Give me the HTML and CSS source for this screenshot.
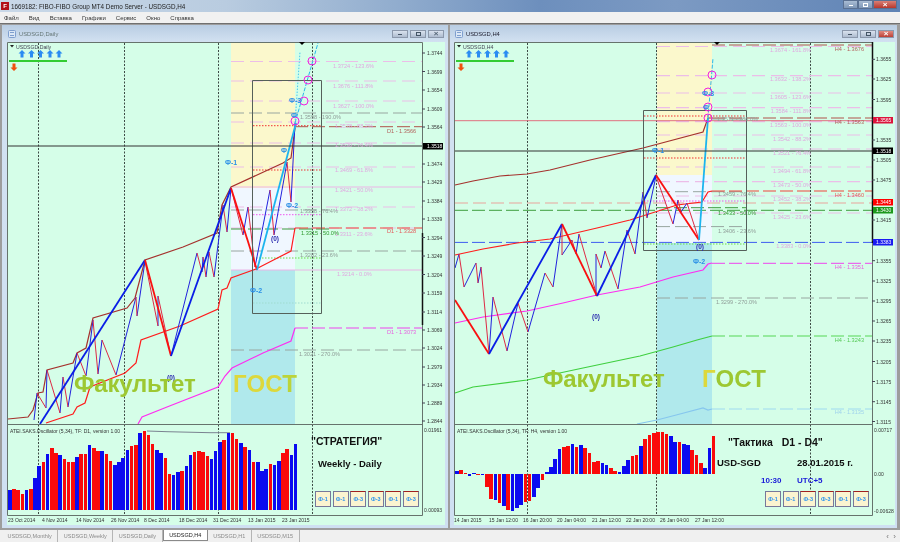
FILE: index.html
```html
<!DOCTYPE html>
<html lang="ru">
<head>
<meta charset="utf-8">
<title>MT4</title>
<link rel="stylesheet" href="styles.css">
</head>
<body>
<div class="app">
  <header class="titlebar">
    <span class="appicon">F</span>
    <span class="apptitle">1669182: FIBO-FIBO Group MT4 Demo Server - USDSGD,H4</span>
    <span class="sysbtns"><i class="sys"><b class="glyph-min"></b></i><i class="sys"><b class="glyph-max"></b></i><i class="sys close"><b class="glyph-x">×</b></i></span>
  </header>
  <nav class="menu"><span>Файл</span><span>Вид</span><span>Вставка</span><span>Графики</span><span>Сервис</span><span>Окно</span><span>Справка</span></nav>
  <main class="mdi">
    <section class="win win-left">
      <div class="wintitle">
        <svg class="winicon" viewBox="0 0 8 8"><rect x=".5" y=".5" width="7" height="7" rx="1" class="wi"/><path d="M2 2.5h4M2 5.5h4" class="wl"/></svg>
        <span class="wname dim">USDSGD,Daily</span>
        <span class="winbtns"><i class="wb"><b class="glyph-min"></b></i><i class="wb"><b class="glyph-max"></b></i><i class="wb"><b class="glyph-x dark">×</b></i></span>
      </div>
      <div class="chart">
        <svg class="plot" width="437" height="483" viewBox="7 42 437 483">
          <rect class="z-y" x="231" y="43" width="64" height="145"/>
          <rect class="z-l" x="231" y="188" width="64" height="82"/>
          <rect class="z-c" x="231" y="270" width="64" height="154"/>
          <path class="vdot" d="M38.500 43V515M124.500 43V515M218.500 43V515M312.500 43V515"/>
          <path class="fib" d="M231 61.500H422M231 81H422M231 101H422M231 122H422M231 143H422M231 167H422M231 207H422M231 228H422"/>
          <path class="fibs" d="M231 187H422M231 270H422"/>
          <path class="gdash" d="M231 113H422M231 251H422M231 350H422M231 210H330"/>
          <path class="gline" d="M231 229H330"/>
          <path class="rd" d="M253 125.700H321M253 170H321"/>
          <path class="md" d="M253 214.700H321"/>
          <path class="grd" d="M253 258H321"/>
          <path class="cd" d="M253 303H321"/>
          <path class="dbrown" d="M295 126.700H422"/>
          <path class="dred" d="M295 228H422"/>
          <path class="dmag" d="M295 328H422"/>
          <polyline class="brown" points="8,419 28,417 33,410 38,393 43,392 47,370 73,363 77,353 86,348 93,318 127,308 135,298 145,260 183,247 217,233 222,205 231,187 283,163 291,158 295,128"/>
          <polyline class="red" points="46,423 73,414 77,407 85,403 90,387 125,373 136,363 141,340 180,326 218,309 222,290 227,288 231,278 256,269 291,251 295,228"/>
          <polyline class="mag" points="138,424 142,417 167,407 218,387 225,376 232,368 263,353 291,341 295,328"/>
          <polyline class="tb" points="34,420 37,393"/><polyline class="tb" points="46,408 47,370"/><polyline class="tb" points="60,413 63,377"/><polyline class="tb" points="68,407 77,353"/><polyline class="tb" points="86,376 93,320"/><polyline class="tb" points="98,374 102,340"/><polyline class="tb" points="116,375 136,297"/><polyline class="tb" points="137,316 145,261"/><polyline class="tb" points="158,326 158,296"/><polyline class="tb" points="171,356 197,253"/><polyline class="tb" points="202,272 203,257"/><polyline class="tb" points="206,277 209,252"/><polyline class="tb" points="214,277 223,205"/><polyline class="tb" points="227,232 231,188"/><polyline class="tb" points="243,235 248,207"/><polyline class="tb" points="255,267 270,190"/><polyline class="tb" points="274,235 287,162"/><polyline class="tb" points="291,202 295,123"/>
          <polyline class="tr" points="37,393 46,408"/><polyline class="tr" points="47,370 60,413"/><polyline class="tr" points="63,377 68,407"/><polyline class="tr" points="77,353 86,376"/><polyline class="tr" points="93,320 98,374"/><polyline class="tr" points="102,340 116,375"/><polyline class="tr" points="136,297 137,316"/><polyline class="tr" points="145,261 158,326"/><polyline class="tr" points="158,296 171,356"/><polyline class="tr" points="197,253 202,272"/><polyline class="tr" points="203,257 206,277"/><polyline class="tr" points="209,252 214,277"/><polyline class="tr" points="223,205 227,232"/><polyline class="tr" points="231,188 243,235"/><polyline class="tr" points="248,207 255,267"/><polyline class="tr" points="270,190 274,235"/><polyline class="tr" points="287,162 291,202"/>
          <polyline class="bb" points="40,424 145,260"/>
          <polyline class="br" points="145,260 171,356"/>
          <polyline class="bb" points="171,356 231,188"/>
          <polyline class="br" points="231,188 257,270"/>
          <polyline class="bc" points="257,270 296,123"/>
          <path class="cdash" d="M295 123L318 43"/>
          <path class="cdot" d="M295 123L300 52"/>
          <path class="box" d="M252.500 80.500H321.500V313.500H252.500Z"/>
          <path class="axis" d="M7.500 42.500H422.500V515.500H7.500ZM7.500 424.500H422.500"/>
          <path class="blk" d="M8 146H422"/>
          <path class="thick" d="M422.500 233V325"/>
          <path class="tip" d="M299 42h6l-3 3z"/>
          <circle class="ring" cx="312" cy="61" r="4"/><circle class="ring" cx="308" cy="80" r="4"/><circle class="ring" cx="304" cy="101" r="4"/><circle class="ring" cx="295" cy="121" r="4"/>
          <g class="fibt">
            <text x="333" y="68">1.3724 - 123.6%</text><text x="333" y="88">1.3676 - 111.8%</text><text x="333" y="108">1.3627 - 100.0%</text><text x="335" y="128">1.3578 - 88.2%</text><text x="335" y="147">1.3530 - 76.4%</text><text x="335" y="172">1.3469 - 61.8%</text><text x="335" y="192">1.3421 - 50.0%</text><text x="335" y="211">1.3372 - 38.2%</text><text x="335" y="236">1.3311 - 23.6%</text><text x="337" y="276">1.3214 - 0.0%</text>
          </g>
          <g class="grayt">
            <text x="300" y="119">1.3598 - 190.0%</text><text x="300" y="213">1.3358 - 76.4%</text><text x="300" y="257">1.3282 - 23.6%</text><text x="299" y="356">1.3021 - 270.0%</text>
          </g>
          <text class="greent" x="301" y="235">1.3315 - 50.0%</text>
          <text class="t-brown" x="387" y="133">D1 - 1.3566</text>
          <text class="t-red" x="387" y="233">D1 - 1.3328</text>
          <text class="t-mag" x="387" y="334">D1 - 1.3073</text>
          <g class="phi">
            <text x="225" y="165">Ф-1</text><text x="286" y="208">Ф-2</text><text x="289" y="103">Ф-3</text><text x="281" y="153">Ф</text><text x="291" y="118">Ф</text><text x="250" y="293">Ф-2</text>
          </g>
          <text class="zero" x="271" y="241">(0)</text>
          <text class="zero" x="167" y="380">(0)</text>
          <text class="fac" x="74" y="392">Факультет</text>
          <text class="gost" x="233" y="392">ГОС<tspan class="gost-g">Т</tspan></text>
          <g class="ticks"><path d="M422 53h3M422 71.500h3M422 90h3M422 109h3M422 127h3M422 164h3M422 182h3M422 201h3M422 219h3M422 237.500h3M422 256h3M422 274.500h3M422 293h3M422 312h3M422 330h3M422 348h3M422 367h3M422 385h3M422 403h3M422 421h3"/></g>
          <g class="ax">
            <text x="427" y="55">1.3744</text><text x="427" y="73.500">1.3699</text><text x="427" y="92">1.3654</text><text x="427" y="111">1.3609</text><text x="427" y="129">1.3564</text><text x="427" y="166">1.3474</text><text x="427" y="184">1.3429</text><text x="427" y="203">1.3384</text><text x="427" y="221">1.3339</text><text x="427" y="239.500">1.3294</text><text x="427" y="258">1.3249</text><text x="427" y="276.500">1.3204</text><text x="427" y="295">1.3159</text><text x="427" y="314">1.3114</text><text x="427" y="332">1.3069</text><text x="427" y="350">1.3024</text><text x="427" y="369">1.2979</text><text x="427" y="387">1.2934</text><text x="427" y="405">1.2889</text><text x="427" y="423">1.2844</text>
            <text x="424" y="432">0.01961</text><text x="424" y="512">0.00093</text>
          </g>
          <rect class="tag-k" x="423" y="143" width="20" height="6.500"/><text class="tagt" x="427" y="148.200">1.3518</text>
          <path class="osclevel" d="M147 431L167 431.700L210 432.700L230 432.700"/>
          <text class="osct" x="10" y="432.500">ATEI.SAKS.Oscillator (5,34), TF: D1, version 1.00</text>
          <g class="dates"><text x="8" y="522">23 Oct 2014</text><text x="42" y="522">4 Nov 2014</text><text x="76" y="522">14 Nov 2014</text><text x="111" y="522">26 Nov 2014</text><text x="144" y="522">8 Dec 2014</text><text x="179" y="522">18 Dec 2014</text><text x="213" y="522">31 Dec 2014</text><text x="248" y="522">13 Jan 2015</text><text x="282" y="522">23 Jan 2015</text></g>
          <text class="note big" x="311" y="445">"СТРАТЕГИЯ"</text>
          <text class="note" x="318" y="466.500">Weekly - Daily</text>
          <g class="arrows"><path d="M22 50l3.500 3.500h-2v4h-3v-4h-2zM31.500 50l3.500 3.500h-2v4h-3v-4h-2zM40.500 50l3.500 3.500h-2v4h-3v-4h-2zM50 50l3.500 3.500h-2v4h-3v-4h-2zM59 50l3.500 3.500h-2v4h-3v-4h-2z"/></g>
          <path class="greenbar" d="M9 61H67"/>
          <path class="downarrow" d="M14 71l-3.500-3.500h2v-4h3v4h2z"/>
          <path class="dropdown" d="M10 45h4l-2 2.500z"/>
          <text class="cname" x="16" y="48.500">USDSGD,Daily</text>
        </svg>
        <div class="bars bars-left">
          <i class="b" style="height:20px"></i><i class="r" style="height:21px"></i><i class="r" style="height:20px"></i><i class="r" style="height:16px"></i><i class="b" style="height:20px"></i><i class="r" style="height:21px"></i><i class="b" style="height:32px"></i><i class="b" style="height:44px"></i><i class="r" style="height:48px"></i><i class="b" style="height:56px"></i><i class="r" style="height:62px"></i><i class="r" style="height:57px"></i><i class="b" style="height:55px"></i><i class="r" style="height:51px"></i><i class="r" style="height:48px"></i><i class="r" style="height:48px"></i><i class="b" style="height:53px"></i><i class="r" style="height:56px"></i><i class="r" style="height:56px"></i><i class="b" style="height:65px"></i><i class="r" style="height:62px"></i><i class="r" style="height:59px"></i><i class="b" style="height:59px"></i><i class="r" style="height:56px"></i><i class="r" style="height:49px"></i><i class="b" style="height:45px"></i><i class="b" style="height:48px"></i><i class="b" style="height:52px"></i><i class="b" style="height:60px"></i><i class="r" style="height:64px"></i><i class="r" style="height:65px"></i><i class="b" style="height:77px"></i><i class="r" style="height:79px"></i><i class="r" style="height:75px"></i><i class="r" style="height:66px"></i><i class="b" style="height:60px"></i><i class="b" style="height:57px"></i><i class="r" style="height:52px"></i><i class="r" style="height:36px"></i><i class="b" style="height:35px"></i><i class="b" style="height:38px"></i><i class="r" style="height:39px"></i><i class="b" style="height:44px"></i><i class="b" style="height:55px"></i><i class="r" style="height:58px"></i><i class="r" style="height:59px"></i><i class="r" style="height:58px"></i><i class="r" style="height:54px"></i><i class="b" style="height:51px"></i><i class="b" style="height:59px"></i><i class="b" style="height:68px"></i><i class="r" style="height:70px"></i><i class="b" style="height:77px"></i><i class="r" style="height:77px"></i><i class="r" style="height:71px"></i><i class="b" style="height:67px"></i><i class="r" style="height:63px"></i><i class="b" style="height:60px"></i><i class="r" style="height:48px"></i><i class="b" style="height:48px"></i><i class="b" style="height:39px"></i><i class="b" style="height:41px"></i><i class="r" style="height:46px"></i><i class="b" style="height:45px"></i><i class="b" style="height:49px"></i><i class="r" style="height:57px"></i><i class="r" style="height:61px"></i><i class="b" style="height:55px"></i><i class="b" style="height:66px"></i>
        </div>
        <div class="btns"><span class="btn">Ф-1</span><span class="btn">Ф-1</span><span class="btn on">Ф-3</span><span class="btn on">Ф-3</span><span class="btn on">Ф-1</span><span class="btn on">Ф-3</span></div>
      </div>
    </section>
    <section class="win win-right">
      <div class="wintitle">
        <svg class="winicon" viewBox="0 0 8 8"><rect x=".5" y=".5" width="7" height="7" rx="1" class="wi"/><path d="M2 2.500h4M2 5.500h4" class="wl"/></svg>
        <span class="wname">USDSGD,H4</span>
        <span class="winbtns"><i class="wb"><b class="glyph-min"></b></i><i class="wb"><b class="glyph-max"></b></i><i class="wb closer"><b class="glyph-x">×</b></i></span>
      </div>
      <div class="chart">
        <svg class="plot" width="441" height="483" viewBox="454 42 441 483">
          <rect class="z-y" x="657" y="43" width="55" height="132"/>
          <rect class="z-l" x="657" y="175" width="55" height="68"/>
          <rect class="z-c" x="657" y="243" width="55" height="181"/>
          <path class="vdot" d="M527.500 43V515M656.500 43V515M810.500 43V515"/>
          <path class="fib" d="M657 46.500H872M657 75.700H872M657 93H872M657 107.700H872M657 121.700H872M657 135H872M657 149H872M657 167H872M657 181.700H872M657 196H872M657 213H872"/>
          <path class="gdash" d="M712 119H746M657 191.700H746M657 226.600H746M657 298H872"/>
          <path class="gline" d="M657 207.700H746"/>
          <path class="rd" d="M644 116H747M644 158H747"/>
          <path class="md" d="M644 201H747"/>
          <path class="grd" d="M644 244H747"/>
          <path class="sal" d="M455 203H872"/>
          <path class="grn" d="M455 210.300H872"/>
          <path class="bld" d="M455 242.400H872"/>
          <path class="rsolid" d="M455 120.700H872"/>
          <path class="dbrown" d="M712 45H872M712 118H872"/>
          <path class="dred" d="M712 191H872"/>
          <path class="dmag" d="M712 263.300H872"/>
          <path class="dgreen" d="M712 336H872"/>
          <path class="dsky" d="M712 409H872"/>
          <polyline class="brown" points="455,185 473,181 500,176 527,174 550,170 590,160 643,148 703,132 708,118 712,118"/>
          <polyline class="red" points="455,255 483,249 517,243 550,239 597,228 630,220 677,205 702,202 708,192 712,191"/>
          <polyline class="mag" points="455,323 483,317 527,311 563,303 597,295 640,287 673,277 703,270 708,264 712,263"/>
          <polyline class="lime" points="455,393 473,387 527,380 583,368 640,356 673,347 697,340 712,336"/>
          <polyline class="sky" points="637,424 657,420 680,414 703,408 708,410 712,409"/>
          <polyline class="tb" points="455,268 459,254"/><polyline class="tb" points="464,287 476,263"/><polyline class="tb" points="478,283 481,267"/><polyline class="tb" points="489,354 493,297"/><polyline class="tb" points="507,351 518,303"/><polyline class="tb" points="528,332 545,273"/><polyline class="tb" points="553,287 562,224"/><polyline class="tb" points="562,255 572,240"/><polyline class="tb" points="576,254 579,234"/><polyline class="tb" points="596,296 596,254"/><polyline class="tb" points="601,268 605,251"/><polyline class="tb" points="618,289 627,230"/><polyline class="tb" points="635,254 643,192"/><polyline class="tb" points="647,218 656,176"/><polyline class="tb" points="673,224 678,200"/><polyline class="tb" points="681,212 687,203"/>
          <polyline class="tr" points="459,254 464,287"/><polyline class="tr" points="476,263 478,283"/><polyline class="tr" points="481,267 489,354"/><polyline class="tr" points="493,297 507,351"/><polyline class="tr" points="518,303 528,332"/><polyline class="tr" points="545,273 553,287"/><polyline class="tr" points="562,224 562,255"/><polyline class="tr" points="572,240 576,254"/><polyline class="tr" points="579,234 597,296"/><polyline class="tr" points="596,254 601,268"/><polyline class="tr" points="605,251 618,289"/><polyline class="tr" points="627,230 635,254"/><polyline class="tr" points="643,192 647,218"/><polyline class="tr" points="656,176 673,224"/><polyline class="tr" points="678,200 681,212"/><polyline class="tr" points="687,203 699,240"/>
          <polyline class="br" points="455,300 489,354"/>
          <polyline class="bb" points="489,354 562,224"/>
          <polyline class="br" points="562,224 597,296"/>
          <polyline class="bb" points="597,296 656,175"/>
          <polyline class="br" points="656,175 699,240"/>
          <polyline class="bc" points="699,240 708,118"/>
          <path class="cdash" d="M708 118L713 58"/>
          <path class="box" d="M643.500 110.500H746.500V250.500H643.500Z"/>
          <path class="axis" d="M454.500 42.500H872.500V515.500H454.500ZM454.500 424.500H872.500"/>
          <path class="blk" d="M455 151H872"/>
          <path class="thick" d="M872.500 42V243"/>
          <path class="tip" d="M714 42h6l-3 3z"/>
          <circle class="ring" cx="712" cy="75" r="4"/><circle class="ring" cx="708" cy="92" r="4"/><circle class="ring" cx="708" cy="107" r="4"/><circle class="ring" cx="708" cy="118" r="4"/>
          <g class="fibt end">
            <text x="811" y="52">1.3674 - 161.8%</text><text x="811" y="81">1.3632 - 138.2%</text><text x="811" y="99">1.3605 - 123.6%</text><text x="811" y="113">1.3584 - 111.8%</text><text x="811" y="127">1.3563 - 100.0%</text><text x="811" y="141">1.3542 - 88.2%</text><text x="811" y="155">1.3521 - 76.4%</text><text x="811" y="173">1.3494 - 61.8%</text><text x="811" y="187">1.3473 - 50.0%</text><text x="811" y="201">1.3452 - 38.2%</text><text x="811" y="219">1.3425 - 23.6%</text><text x="811" y="248">1.3383 - 0.0%</text>
          </g>
          <g class="grayt">
            <text x="717" y="121">1.3571 - 386.0%</text><text x="718" y="196">1.3459 - 76.4%</text><text x="718" y="233">1.3406 - 23.6%</text><text x="716" y="304">1.3299 - 270.0%</text>
          </g>
          <text class="greent" x="718" y="214.500">1.3433 - 50.0%</text>
          <g class="end">
            <text class="t-brown" x="864" y="51">H4 - 1.3676</text>
            <text class="t-brown" x="864" y="124">H4 - 1.3563</text>
            <text class="t-red" x="864" y="196.500">H4 - 1.3460</text>
            <text class="t-mag" x="864" y="269">H4 - 1.3351</text>
            <text class="t-lime" x="864" y="342">H4 - 1.3243</text>
            <text class="t-sky" x="864" y="414">H4 - 1.3135</text>
          </g>
          <g class="phi">
            <text x="652" y="153">Ф-1</text><text x="693" y="264">Ф-2</text><text x="702" y="96">Ф-3</text><text x="703" y="109.500">Ф</text>
          </g>
          <text class="zero" x="696" y="249">(0)</text>
          <text class="zero" x="592" y="319">(0)</text>
          <text class="fac" x="543" y="387">Факультет</text>
          <text class="gost gost-y" x="702" y="387">Г<tspan class="gost-o">ОСТ</tspan></text>
          <g class="ticks"><path d="M872 59.300h3M872 79h3M872 99.500h3M872 120h3M872 140h3M872 160h3M872 180h3M872 200h3M872 220h3M872 240h3M872 260.700h3M872 281h3M872 301h3M872 321h3M872 341h3M872 361.500h3M872 381.500h3M872 401.700h3M872 421.500h3"/></g>
          <g class="ax">
            <text x="876" y="61.300">1.3655</text><text x="876" y="81">1.3625</text><text x="876" y="101.500">1.3595</text><text x="876" y="142">1.3535</text><text x="876" y="162">1.3505</text><text x="876" y="182">1.3475</text><text x="876" y="222">1.3415</text><text x="876" y="262.700">1.3355</text><text x="876" y="283">1.3325</text><text x="876" y="303">1.3295</text><text x="876" y="323">1.3265</text><text x="876" y="343">1.3235</text><text x="876" y="363.500">1.3205</text><text x="876" y="383.500">1.3175</text><text x="876" y="403.700">1.3145</text><text x="876" y="423.500">1.3115</text>
            <text x="874" y="432">0.00717</text><text x="874" y="475.500">0.00</text><text x="874" y="513">-0.00628</text>
          </g>
          <rect class="tag-cr" x="873" y="117" width="20" height="6.500"/><text class="tagt" x="876" y="122.200">1.3565</text>
          <rect class="tag-k" x="873" y="147.500" width="20" height="6.500"/><text class="tagt" x="876" y="152.700">1.3518</text>
          <rect class="tag-r" x="873" y="199" width="20" height="6.500"/><text class="tagt" x="876" y="204.200">1.3445</text>
          <rect class="tag-g" x="873" y="207" width="20" height="6.500"/><text class="tagt" x="876" y="212.200">1.3430</text>
          <rect class="tag-b" x="873" y="239" width="20" height="6.500"/><text class="tagt" x="876" y="244.200">1.3383</text>
          <text class="osct" x="457" y="433">ATEI.SAKS.Oscillator (5,34), TF: H4, version 1.00</text>
          <g class="dates"><text x="454" y="522">14 Jan 2015</text><text x="489" y="522">15 Jan 12:00</text><text x="523" y="522">16 Jan 20:00</text><text x="557" y="522">20 Jan 04:00</text><text x="592" y="522">21 Jan 12:00</text><text x="626" y="522">22 Jan 20:00</text><text x="660" y="522">26 Jan 04:00</text><text x="695" y="522">27 Jan 12:00</text></g>
          <text class="note big" xml:space="preserve" x="728" y="446">"Тактика   D1 - D4"</text>
          <text class="note" x="717" y="465.500">USD-SGD</text>
          <text class="note" x="797" y="465.500">28.01.2015 г.</text>
          <text class="note blue" x="761" y="483">10:30</text>
          <text class="note blue" x="797" y="483">UTC+5</text>
          <g class="arrows"><path d="M469 50l3.500 3.500h-2v4h-3v-4h-2zM478.500 50l3.500 3.500h-2v4h-3v-4h-2zM487.500 50l3.500 3.500h-2v4h-3v-4h-2zM496.500 50l3.500 3.500h-2v4h-3v-4h-2zM506 50l3.500 3.500h-2v4h-3v-4h-2z"/></g>
          <path class="greenbar" d="M456 61H514"/>
          <path class="downarrow" d="M461 71l-3.500-3.500h2v-4h3v4h2z"/>
          <path class="dropdown" d="M457 45h4l-2 2.500z"/>
          <text class="cname" x="463" y="48.500">USDSGD,H4</text>
        </svg>
        <div class="bars bars-right">
          <i class="b" style="height:3px"></i><i class="r" style="height:4px"></i><i class="r" style="height:1px"></i><i class="b d" style="height:2px"></i><i class="b" style="height:1px"></i><i class="r d" style="height:1px"></i><i class="b d" style="height:1px"></i><i class="r d" style="height:13px"></i><i class="r d" style="height:25px"></i><i class="b d" style="height:26px"></i><i class="r d" style="height:29px"></i><i class="b d" style="height:32px"></i><i class="r d" style="height:36px"></i><i class="b d" style="height:37px"></i><i class="b d" style="height:34px"></i><i class="b d" style="height:31px"></i><i class="r d" style="height:28px"></i><i class="r d" style="height:27px"></i><i class="b d" style="height:23px"></i><i class="b d" style="height:14px"></i><i class="r d" style="height:6px"></i><i class="b" style="height:2px"></i><i class="b" style="height:7px"></i><i class="b" style="height:15px"></i><i class="b" style="height:25px"></i><i class="r" style="height:27px"></i><i class="r" style="height:28px"></i><i class="b" style="height:30px"></i><i class="r" style="height:27px"></i><i class="b" style="height:29px"></i><i class="r" style="height:26px"></i><i class="r" style="height:21px"></i><i class="r" style="height:12px"></i><i class="r" style="height:13px"></i><i class="b" style="height:11px"></i><i class="b" style="height:9px"></i><i class="r" style="height:6px"></i><i class="r" style="height:3px"></i><i class="b" style="height:2px"></i><i class="b" style="height:8px"></i><i class="b" style="height:14px"></i><i class="r" style="height:18px"></i><i class="r" style="height:19px"></i><i class="b" style="height:28px"></i><i class="r" style="height:35px"></i><i class="r" style="height:39px"></i><i class="r" style="height:41px"></i><i class="r" style="height:42px"></i><i class="r" style="height:42px"></i><i class="r" style="height:40px"></i><i class="b" style="height:38px"></i><i class="b" style="height:32px"></i><i class="r" style="height:32px"></i><i class="b" style="height:30px"></i><i class="b" style="height:29px"></i><i class="r" style="height:24px"></i><i class="r" style="height:19px"></i><i class="r" style="height:11px"></i><i class="b" style="height:6px"></i><i class="b" style="height:26px"></i><i class="r" style="height:38px"></i>
        </div>
        <div class="btns"><span class="btn">Ф-1</span><span class="btn">Ф-1</span><span class="btn on">Ф-3</span><span class="btn on">Ф-3</span><span class="btn on">Ф-1</span><span class="btn on">Ф-3</span></div>
      </div>
    </section>
  </main>
  <footer class="tabs">
    <span class="tab">USDSGD,Monthly</span><span class="tab">USDSGD,Weekly</span><span class="tab">USDSGD,Daily</span><span class="tab active">USDSGD,H4</span><span class="tab">USDSGD,H1</span><span class="tab">USDSGD,M15</span>
    <span class="scroll">‹&nbsp;&nbsp;›</span>
  </footer>
</div>
</body>
</html>
```

FILE: styles.css
```css
* { box-sizing: border-box; }
html, body { margin: 0; padding: 0; }
body { width: 900px; height: 542px; overflow: hidden; background: #f0f0f0; font-family: "Liberation Sans", Arial, sans-serif; }
.app { width: 900px; height: 542px; display: flex; flex-direction: column; filter: blur(.3px); overflow: hidden; }

.titlebar { height: 12px; flex: none; display: flex; align-items: center; gap: 2px; padding-left: 1px;
  background: linear-gradient(90deg, #c9d8e8 0, #b9cce0 25%, #8fabcd 45%, #6d8fbd 60%, #7c9ac3 75%, #5f83b5 100%); }
.appicon { width: 8px; height: 8px; background: #b3101a; color: #fff; font-size: 6px; font-weight: 700; display: flex; align-items: center; justify-content: center; }
.apptitle { font-size: 6.3px; color: #222; margin-left: 0; }
.sysbtns { margin-left: auto; margin-right: 3px; display: flex; align-self: flex-start; }
.sys { width: 15px; height: 9px; background: linear-gradient(#a9bcd4, #7f97b7); border: 1px solid #5a7092; display: flex; align-items: center; justify-content: center; font-style: normal; }
.sys.close { width: 24px; background: linear-gradient(#d98076, #b8372c); }
.glyph-min { width: 4px; height: 1.5px; background: #fff; margin-top: 2px; }
.glyph-max { width: 5px; height: 4px; border: 1px solid #fff; }
.glyph-x { color: #fff; font-size: 8px; line-height: 6px; }
.glyph-x.dark { color: #567; }

.menu { height: 11px; flex: none; display: flex; align-items: center; gap: 10px; padding-left: 4px; background: #f1f1f1; font-size: 6px; color: #333; }

.mdi { flex: 1; display: flex; justify-content: flex-start; gap: 2px; padding: 1px 3px 2px 2px; background: #9d9d9d; border-top: 1px solid #707070; min-height: 0; }
.win { display: flex; flex-direction: column; padding: 0 3px 4px 5px; background: linear-gradient(#b9cde3 0, #d2e1f1 17px, #cfe0f2 100%); }
.win-left { width: 446px; padding: 0 3px 3px 5px; }
.win-right { width: 447px; padding: 0 2px 3px 4px; }
.wintitle { height: 17px; flex: none; display: flex; align-items: center; gap: 3px; }
.winicon { width: 8px; height: 8px; margin-left: 1px; }
.wi { fill: #dbe7f5; stroke: #7f9fce; }
.wl { stroke: #7f9fce; fill: none; }
.wname { font-size: 5.8px; color: #223; }
.wname.dim { color: #677; }
.winbtns { margin-left: auto; margin-right: 1px; display: flex; gap: 2px; }
.wb { width: 16px; height: 8px; border: 1px solid #8b98ab; background: linear-gradient(#d9e2ee, #aebccf); display: flex; align-items: center; justify-content: center; font-style: normal; }
.wb .glyph-min { background: #456; }
.wb .glyph-max { border-color: #456; }
.wb.closer { background: linear-gradient(#e08a80, #bd4036); }

.chart { position: relative; flex: 1; background: #d5fee8; overflow: hidden; }
.plot { display: block; font-family: "Liberation Sans", Arial, sans-serif; }
.plot path, .plot polyline, .plot circle { fill: none; }
.plot text { font-size: 5.5px; }
.end text { text-anchor: end; }

.z-y { fill: #fbf8cc; }
.z-l { fill: #f0f7ff; }
.z-c { fill: #b0e9ec; }
.vdot { stroke: #3d4a45; stroke-dasharray: 2 1.500; stroke-width: 1; }
.plot .fib { stroke: #ecbde8; stroke-width: 1.200; stroke-dasharray: 13 6; }
.plot .fibs { stroke: #ecb4e6; stroke-width: 1; }
.plot .gdash { stroke: #98a6a0; stroke-width: 1; stroke-dasharray: 13 5; }
.plot .gline { stroke: #3f9a3f; stroke-width: 1; stroke-dasharray: 13 4; }
.plot .rd { stroke: #f03030; stroke-dasharray: 1.500 1.500; }
.plot .md { stroke: #ee55ee; stroke-dasharray: 1.500 1.500; }
.plot .grd { stroke: #66dd44; stroke-dasharray: 1.500 1.500; }
.plot .cd { stroke: #9fdcd0; stroke-dasharray: 1.500 1.500; }
.plot .sal { stroke: #e9a49c; stroke-dasharray: 13 5; stroke-width: 1.200; }
.plot .grn { stroke: #3e9e3e; stroke-dasharray: 13 4; }
.plot .bld { stroke: #3e5cf0; stroke-dasharray: 13 4; }
.plot .rsolid { stroke: #e0707f; stroke-width: 1; }
.plot .dbrown { stroke: #b0534a; stroke-dasharray: 13 4; }
.plot .dred { stroke: #f0463c; stroke-dasharray: 13 4; }
.plot .dmag { stroke: #ee44ee; stroke-dasharray: 13 4; }
.plot .dgreen { stroke: #55d755; stroke-dasharray: 13 4; }
.plot .dsky { stroke: #9fdaf0; stroke-dasharray: 13 4; }
.plot .brown { stroke: #a5312d; stroke-width: 1.200; }
.plot .red { stroke: #ff1c1c; stroke-width: 1.200; }
.plot .mag { stroke: #ff2cf0; stroke-width: 1.200; }
.plot .lime { stroke: #3fcf3f; stroke-width: 1.200; }
.plot .sky { stroke: #86c6ee; stroke-width: 1.200; }
.plot .tb { stroke: #2222dd; stroke-width: 1; }
.plot .tr { stroke: #dd2a45; stroke-width: 1; }
.plot .bb { stroke: #0a1ee6; stroke-width: 1.800; }
.plot .br { stroke: #fa1010; stroke-width: 1.800; }
.plot .bc { stroke: #1cb4ee; stroke-width: 1.800; }
.plot .cdash { stroke: #2bb8ea; stroke-width: 1; stroke-dasharray: 4 1.500; }
.plot .cdot { stroke: #49c8ee; stroke-dasharray: 1.500 1.500; }
.plot .box { stroke: #55605a; stroke-width: 1; }
.plot .axis { stroke: #66736c; stroke-width: 1; }
.plot .blk { stroke: #333; stroke-width: 1; }
.plot .thick { stroke: #111; stroke-width: 1.500; }
.plot .tip { fill: #000; }
.plot .ring { stroke: #f020e0; stroke-width: 1; }
.plot .ticks path { stroke: #445; }
.plot .osclevel { stroke: #7a8290; }
.plot .greenbar { stroke: #33cc33; stroke-width: 2; }
.plot .arrows path { fill: #2a8cf2; }
.plot .downarrow { fill: #f0500f; }
.plot .dropdown { fill: #222; }

.fibt text { fill: #e0a8e0; font-size: 5.600px; }
.grayt text { fill: #8f9d98; font-size: 5.600px; }
.plot .greent { fill: #2e9a2e; font-size: 5.600px; }
.plot .t-brown { fill: #b2625c; font-size: 5.600px; }
.plot .t-red { fill: #e45a5a; font-size: 5.600px; }
.plot .t-mag { fill: #e85fe0; font-size: 5.600px; }
.plot .t-lime { fill: #55c855; font-size: 5.600px; }
.plot .t-sky { fill: #9fd2ec; font-size: 5.600px; }
.phi text { fill: #2b90e6; font-size: 7px; font-weight: 700; }
.plot .zero { fill: #2a2ab0; font-size: 6.500px; font-weight: 700; }
.plot .fac { fill: #9dc832; font-size: 24px; font-weight: 700; letter-spacing: -.2px; }
.plot .gost { fill: #dcd83c; font-size: 24px; font-weight: 700; letter-spacing: .2px; }
.plot .gost-g { fill: #bcd43a; }
.plot .gost-o { fill: #9dc832; }
.ax text { fill: #333; font-size: 5px; }
.plot .tagt { fill: #fff; font-size: 5px; }
.tag-k { fill: #000; }
.tag-cr { fill: #dc143c; }
.tag-r { fill: #ff0000; }
.tag-g { fill: #1c981c; }
.tag-b { fill: #1a1af0; }
.plot .osct { fill: #333; font-size: 5px; }
.dates text { fill: #333; font-size: 5px; }
.plot .note { fill: #111; font-size: 9.500px; font-weight: 700; }
.plot .note.big { font-size: 10.500px; }
.plot .note.blue { fill: #1a1ad8; font-size: 8px; }
.plot .cname { fill: #445; font-size: 5.200px; }

.bars { position: absolute; display: flex; align-items: flex-end; gap: .7px; }
.bars i { display: block; flex: 1; min-width: 0; }
.bars .b { background: #0a0af0; }
.bars .r { background: #fa0a0a; }
.bars-left { left: 1px; top: 383px; width: 289px; height: 85px; }
.bars-right { left: 1px; top: 383px; width: 260px; height: 49px; }
.bars .d { align-self: flex-start; margin-top: 49px; }

.btns { position: absolute; top: 449px; left: 308px; display: flex; gap: 1.600px; }
.win-right .btns { left: 311px; }
.btn { width: 16px; height: 15.500px; background: #fbf4d0; border: 1px solid #77789a; color: #2c94ee; font-size: 5.500px; font-weight: 700; display: flex; align-items: center; justify-content: center; }
.btn.on { border-top: 1px solid #a02020; }

.tabs { height: 12px; flex: none; display: flex; align-items: stretch; padding-left: 2px; background: #f0f0f0; font-size: 5.500px; color: #8a8a8a; }
.tab { display: flex; align-items: center; padding: 0 5.500px; border-right: 1px solid #b5b5b5; }
.tab.active { background: #fff; color: #222; border: 1px solid #8a8a8a; border-top: none; border-bottom-width: 1px; margin-bottom: 1px; }
.scroll { margin-left: auto; margin-right: 4px; align-self: center; font-size: 8px; color: #777; }
```
